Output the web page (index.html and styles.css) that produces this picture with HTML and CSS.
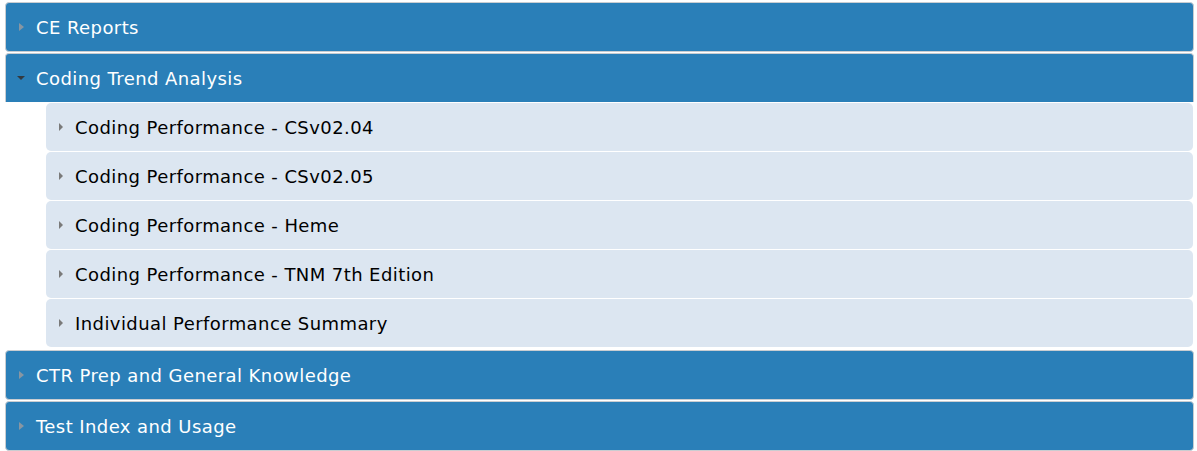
FILE: index.html
```html
<!DOCTYPE html>
<html>
<head>
<meta charset="utf-8">
<link rel="stylesheet" href="styles.css">
</head>
<body>
<div class="accordion">
  <div class="header"><span class="tri right"></span><span class="label">CE Reports</span></div>
  <div class="header open"><span class="tri down"></span><span class="label">Coding Trend Analysis</span></div>
  <div class="subs">
    <div class="sub"><span class="tri right"></span><span class="label">Coding Performance - CSv02.04</span></div>
    <div class="sub"><span class="tri right"></span><span class="label">Coding Performance - CSv02.05</span></div>
    <div class="sub"><span class="tri right"></span><span class="label">Coding Performance - Heme</span></div>
    <div class="sub"><span class="tri right"></span><span class="label">Coding Performance - TNM 7th Edition</span></div>
    <div class="sub"><span class="tri right"></span><span class="label">Individual Performance Summary</span></div>
  </div>
  <div class="header"><span class="tri right"></span><span class="label">CTR Prep and General Knowledge</span></div>
  <div class="header"><span class="tri right"></span><span class="label">Test Index and Usage</span></div>
</div>
</body>
</html>
```
FILE: styles.css
```css
html, body {
  margin: 0;
  padding: 0;
  background: #ffffff;
}
body {
  font-family: "DejaVu Sans", Verdana, sans-serif;
  font-size: 18px;
  letter-spacing: 0.42px;
}
.accordion {
  display: flex;
  flex-direction: column;
  gap: 1px;
  padding: 2px 3px 0 5px;
}
.header {
  display: flex;
  align-items: center;
  height: 48px;
  background: #2a7fb8;
  border: 1px solid #c9cdd1;
  border-radius: 4px;
  color: #ffffff;
  padding-left: 13px;
}
.header.open {
  border-bottom: none;
  height: 48px;
  border-radius: 4px 4px 0 0;
  padding-left: 11px;
}
.subs {
  display: flex;
  flex-direction: column;
  gap: 1px;
  padding: 0 1px 2px 41px;
}
.sub {
  display: flex;
  align-items: center;
  height: 48px;
  background: #dce6f1;
  border-radius: 5px;
  color: #000000;
  padding-left: 13px;
}
.tri {
  width: 0;
  height: 0;
  display: inline-block;
  flex: none;
}
.header .tri.right {
  border-top: 4px solid transparent;
  border-bottom: 4px solid transparent;
  border-left: 5px solid #8896a2;
  margin-right: 12px;
}
.sub .tri.right {
  border-top: 4px solid transparent;
  border-bottom: 4px solid transparent;
  border-left: 4px solid #7a7a7a;
  margin-right: 12px;
}
.tri.down {
  border-left: 4px solid transparent;
  border-right: 4px solid transparent;
  border-top: 4px solid #333a40;
  margin-right: 11px;
}
.label {
  white-space: nowrap;
}
```
